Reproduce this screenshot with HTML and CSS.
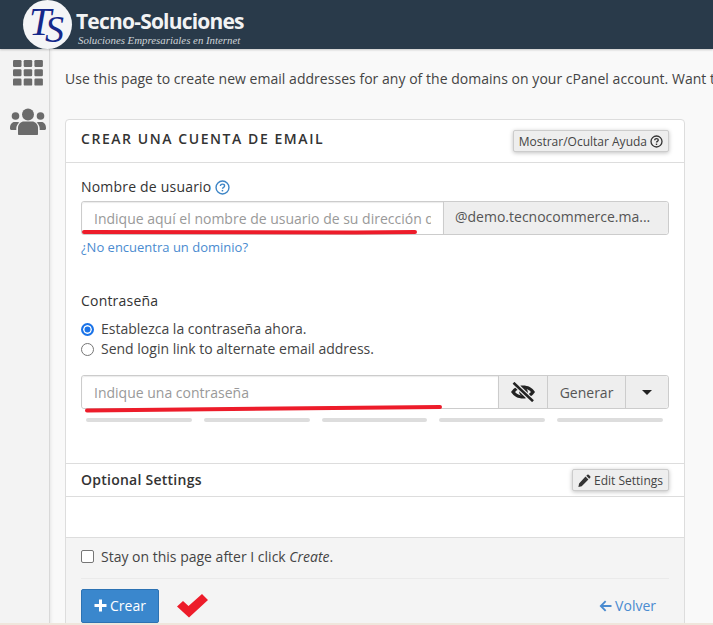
FILE: index.html
```html
<!DOCTYPE html>
<html lang="es">
<head>
<meta charset="utf-8">
<title>Crear una cuenta de email</title>
<link rel="stylesheet" href="styles.css">
</head>
<body>
<header class="topbar">
  <div class="logo-circle"><span class="logo-t">T</span><span class="logo-s">S</span></div>
  <div class="brand">
    <div class="brand-name">Tecno-Soluciones</div>
    <div class="brand-sub">Soluciones Empresariales en Internet</div>
  </div>
</header>
<div class="layout">
  <nav class="sidebar">
    <svg class="side-icon" width="30" height="26" viewBox="0 0 30 26"><g fill="#6b6b6b"><rect x="0" y="0" width="8.5" height="7" rx="1.2"/><rect x="10.7" y="0" width="8.5" height="7" rx="1.2"/><rect x="21.4" y="0" width="8.5" height="7" rx="1.2"/><rect x="0" y="9.3" width="8.5" height="7" rx="1.2"/><rect x="10.7" y="9.3" width="8.5" height="7" rx="1.2"/><rect x="21.4" y="9.3" width="8.5" height="7" rx="1.2"/><rect x="0" y="18.6" width="8.5" height="7" rx="1.2"/><rect x="10.7" y="18.6" width="8.5" height="7" rx="1.2"/><rect x="21.4" y="18.6" width="8.5" height="7" rx="1.2"/></g></svg>
    <svg class="side-icon" width="36" height="27" viewBox="0 0 36 27"><g fill="#6b6b6b"><circle cx="18" cy="6.5" r="6"/><circle cx="5.5" cy="8" r="3.8"/><circle cx="30.5" cy="8" r="3.8"/><path d="M8 26v-6c0-4 3-6.500 6-6.500h8c3 0 6 2.500 6 6.500v6c0 .6-.5 1-1 1H9c-.5 0-1-.4-1-1z"/><path d="M0 20c0-3.500 2-6 4.500-6h3c.7 0 1.300.2 1.800.5C7.500 16 6.300 18 6.300 20.500V22H1.500C.6 22 0 21.400 0 20.500z"/><path d="M36 20c0-3.500-2-6-4.500-6h-3c-.7 0-1.300.2-1.800.5 1.800 1.500 3 3.500 3 6V22h4.800c.9 0 1.500-.6 1.500-1.500z"/></g></svg>
  </nav>
  <main class="content">
    <p class="intro">Use this page to create new email addresses for any of the domains on your cPanel account. Want to</p>
    <section class="panel">
      <div class="panel-head">
        <h2 class="panel-title">CREAR UNA CUENTA DE EMAIL</h2>
        <button class="chip chip-help">Mostrar/Ocultar Ayuda
          <svg class="q-icon" width="13" height="13" viewBox="0 0 13 13"><circle cx="6.500" cy="6.500" r="5.500" fill="none" stroke="#333" stroke-width="1.300"/><path d="M4.700 5.200c0-1 .8-1.600 1.800-1.600s1.800.6 1.800 1.500c0 1.300-1.800 1.200-1.800 2.500" fill="none" stroke="#333" stroke-width="1.300"/><rect x="5.800" y="8.600" width="1.400" height="1.400" fill="#333"/></svg>
        </button>
      </div>
      <div class="panel-body">
        <label class="field-label">Nombre de usuario
          <svg class="q-icon" width="15" height="15" viewBox="0 0 13 13"><circle cx="6.500" cy="6.500" r="5.600" fill="none" stroke="#3d85c6" stroke-width="1.200"/><path d="M4.700 5.200c0-1 .8-1.600 1.800-1.600s1.800.6 1.800 1.500c0 1.300-1.800 1.200-1.800 2.500" fill="none" stroke="#3d85c6" stroke-width="1.200"/><rect x="5.800" y="8.600" width="1.300" height="1.300" fill="#3d85c6"/></svg>
        </label>
        <div class="input-group">
          <input class="text-input" type="text" placeholder="Indique aquí el nombre de usuario de su dirección de correo">
          <span class="addon addon-domain">@demo.tecnocommerce.ma...</span>
        </div>
        <a class="link-small" href="#">¿No encuentra un dominio?</a>

        <div class="field-label pw-label">Contraseña</div>
        <label class="radio-row"><span class="radio radio-on"></span>Establezca la contraseña ahora.</label>
        <label class="radio-row"><span class="radio"></span>Send login link to alternate email address.</label>
        <div class="input-group pw-group">
          <input class="text-input" type="text" placeholder="Indique una contraseña">
          <span class="addon addon-eye">
            <svg width="26" height="20" viewBox="0 0 26 20"><path d="M1 10C4 5.500 8 3.500 13 3.500S22 5.500 25 10C22 14.500 18 16.500 13 16.500S4 14.500 1 10z" fill="#222"/><path d="M5 10C7 7.700 9.500 6.500 13 6.500S19 7.700 21 10C19 12.300 16.500 13.500 13 13.500S7 12.300 5 10z" fill="#eee"/><circle cx="13.500" cy="10" r="4.300" fill="#222"/><path d="M3.500 .5 23 19.500" stroke="#eee" stroke-width="5"/><path d="M3.500 .8 23 19.200" stroke="#222" stroke-width="2.600"/></svg>
          </span>
          <span class="addon addon-gen">Generar</span>
          <span class="addon addon-caret"><span class="caret"></span></span>
        </div>
        <div class="strength">
          <span class="bar"></span><span class="bar"></span><span class="bar"></span><span class="bar"></span><span class="bar"></span>
        </div>
      </div>
      <div class="optional-head">
        <h3 class="optional-title">Optional Settings</h3>
        <button class="chip chip-edit">
          <svg width="13" height="13" viewBox="0 0 13 13"><path d="M9.300.8a1 1 0 0 1 1.400 0l1.500 1.500a1 1 0 0 1 0 1.400l-1 1L8.300 1.800zM7.500 2.600l2.900 2.900-6.700 6.700L.4 12.900l.7-3.400z" fill="#333"/></svg>
          Edit Settings
        </button>
      </div>
      <div class="optional-body"></div>
      <div class="panel-foot">
        <label class="check-row"><span class="checkbox"></span>Stay on this page after I click&nbsp;<em>Create</em>.</label>
        <div class="actions">
          <button class="btn-primary">
            <svg width="13" height="13" viewBox="0 0 13 13"><path d="M5 .5h3V5h4.500v3H8v4.500H5V8H.5V5H5z" fill="#fff"/></svg>
            Crear
          </button>
          <a class="back-link" href="#">
            <svg width="13" height="12" viewBox="0 0 13 12"><path d="M6 .5 7.300 1.800 4.200 4.900H12.500V7.100H4.200L7.300 10.200 6 11.500.5 6z" fill="#4a8bd0"/></svg>
            Volver
          </a>
        </div>
      </div>
    </section>
  </main>
</div>
<svg class="marks" width="713" height="625" viewBox="0 0 713 625">
  <path d="M84 232C180 232.500 300 233 415 232" fill="none" stroke="#ed1c2a" stroke-width="4" stroke-linecap="round"/>
  <path d="M87 410.500C200 409.500 320 408.500 440 407" fill="none" stroke="#ed1c2a" stroke-width="4" stroke-linecap="round"/>
  <path d="M177 606.500 183 601 188.500 606 202 594 208 600 189 617.500z" fill="#ed1c2a"/>
</svg>
<div class="bottom-strip"></div>
</body>
</html>
```

FILE: styles.css
```css
* { box-sizing: border-box; }
html, body { margin: 0; height: 625px; overflow: hidden; }
body {
  font-family: "Open Sans", sans-serif;
  font-size: 14px;
  color: #333;
  background: #f9f9f9;
  position: relative;
}
.topbar {
  height: 49px;
  background: #293a4a;
  display: flex;
  align-items: flex-start;
  padding-left: 23px;
  position: relative;
  z-index: 2;
  box-shadow: 0 1px 2px rgba(0,0,0,.2);
}
.logo-circle {
  width: 49px;
  height: 49px;
  flex: none;
  border-radius: 50%;
  background: #f4f5f7;
  position: relative;
  font-family: "Liberation Serif", serif;
  font-style: italic;
  color: #14288a;
}
.logo-t, .logo-s { position: absolute; line-height: 1; }
.logo-t { left: 6px; top: 2px; font-size: 40px; }
.logo-s { left: 22px; top: 10px; font-size: 38px; }
.brand { margin-left: 4px; padding-top: 7px; }
.brand-name {
  font-family: "Open Sans", sans-serif;
  font-weight: 700;
  font-size: 21px;
  line-height: 28px;
  letter-spacing: -.8px;
  color: #f2f3f4;
  white-space: nowrap;
}
.brand-sub {
  font-family: "Liberation Serif", serif;
  font-style: italic;
  font-size: 10.830px;
  line-height: 11px;
  color: #cfd4d8;
  margin-left: 2px;
  white-space: nowrap;
}
.layout { display: flex; height: 576px; }
.sidebar {
  width: 50px;
  flex: none;
  background: #f3f3f3;
  border-right: 1px solid #d8d8d8;
  box-shadow: 1px 0 3px rgba(0,0,0,.08);
  display: flex;
  flex-direction: column;
  align-items: center;
  padding-top: 11px;
  gap: 22px;
}
.side-icon { margin-left: 6px; }
.content { flex: 1; min-width: 0; padding: 20px 28px 0 15px; overflow: hidden; }
.intro {
  margin: 0 0 30px;
  font-size: 14px;
  line-height: 20px;
  letter-spacing: .03px;
  white-space: nowrap;
  color: #444;
}
.panel {
  width: 620px;
  background: #fff;
  border: 1px solid #ddd;
  border-radius: 4px 4px 0 0;
}
.panel-head {
  height: 43px;
  border-bottom: 1px solid #ddd;
  display: flex;
  align-items: center;
  justify-content: space-between;
  padding: 0 15px;
}
.panel-title {
  margin: 0;
  font-size: 14px;
  font-weight: 600;
  letter-spacing: 1.560px;
  line-height: 20px;
  padding-bottom: 4px;
}
.chip {
  font: inherit;
  font-size: 12px;
  color: #444;
  background: #eee;
  border: 1px solid #ccc;
  border-radius: 2px;
  box-shadow: 0 1px 4px rgba(0,0,0,.25);
  height: 22px;
  padding: 0 5px;
  display: inline-flex;
  align-items: center;
  gap: 3px;
  white-space: nowrap;
}
.panel-body { padding: 14px 15px 0; height: 300px; }
.field-label {
  display: flex;
  align-items: center;
  gap: 4px;
  font-weight: 500;
  letter-spacing: .2px;
  font-size: 14px;
  line-height: 20px;
}
.input-group {
  display: flex;
  height: 34px;
  margin-top: 4px;
  border: 1px solid #ccc;
  border-radius: 3px;
  width: 588px;
}
.text-input {
  flex: 1;
  min-width: 0;
  border: 0;
  outline: 0;
  padding: 0 12px;
  font: inherit;
  font-size: 14px;
  background: #fff;
  border-radius: 3px 0 0 3px;
  box-shadow: inset 0 1px 1px rgba(0,0,0,.08);
}
.text-input::placeholder { color: #999; opacity: 1; }
.addon {
  display: flex;
  align-items: center;
  justify-content: center;
  flex: none;
  background: #eee;
  border-left: 1px solid #ccc;
  color: #555;
  white-space: nowrap;
}
.addon-domain { width: 225px; padding: 0 11px 3px; justify-content: flex-start; border-radius: 0 3px 3px 0; font-size: 14px; }
.link-small {
  display: block;
  margin-top: 3px;
  font-size: 13px;
  line-height: 18px;
  color: #4a8bd0;
  text-decoration: none;
}
.pw-label { margin-top: 35px; }
.radio-row {
  display: flex;
  align-items: center;
  gap: 7px;
  line-height: 20px;
  height: 20px;
  color: #444;
}
.pw-label + .radio-row { margin-top: 8px; }
.radio {
  width: 13px;
  height: 13px;
  flex: none;
  border-radius: 50%;
  border: 1px solid #767676;
  background: #fff;
}
.radio-on { border: 2px solid #1a73e8; box-shadow: inset 0 0 0 1.500px #fff; background: #1a73e8; }
.pw-group { margin-top: 16px; }
.addon-eye { width: 49px; }
.addon-gen { width: 78px; }
.addon-caret { width: 43px; border-radius: 0 3px 3px 0; }
.caret {
  width: 0; height: 0;
  border-left: 5px solid transparent;
  border-right: 5px solid transparent;
  border-top: 5px solid #222;
}
.strength { display: flex; gap: 12px; width: 577px; margin: 9px 0 0 5px; }
.bar { flex: 1; height: 4px; background: #ddd; border-radius: 2px; }
.optional-head {
  height: 34px;
  border-top: 1px solid #ddd;
  border-bottom: 1px solid #ddd;
  display: flex;
  align-items: center;
  justify-content: space-between;
  padding: 0 15px;
}
.optional-title { margin: 0; padding-bottom: 2px; font-size: 14px; font-weight: 600; letter-spacing: .25px; }
.chip-edit { gap: 3px; }
.optional-body { height: 40px; }
.panel-foot {
  background: #f4f4f4;
  border-top: 1px solid #ddd;
  padding: 0 15px;
  height: 100px;
}
.check-row {
  display: flex;
  align-items: center;
  height: 41px;
  padding-bottom: 3px;
  border-bottom: 1px solid #eaeaea;
  color: #444;
  white-space: nowrap;
}
.checkbox {
  width: 13px;
  height: 13px;
  flex: none;
  margin-right: 7px;
  background: #fff;
  border: 1px solid #767676;
  border-radius: 2px;
}
.actions { display: flex; align-items: center; justify-content: space-between; padding-top: 10px; }
.btn-primary {
  font: inherit;
  font-size: 14px;
  color: #fff;
  background: #3a87cd;
  border: 1px solid #2c72b3;
  border-radius: 2px;
  height: 34px;
  width: 78px;
  padding-bottom: 2px;
  display: inline-flex;
  align-items: center;
  justify-content: center;
  gap: 3px;
}
.back-link {
  display: inline-flex;
  align-items: center;
  gap: 3px;
  color: #4a8bd0;
  text-decoration: none;
  font-size: 14px;
  margin: 0 13px 1px 0;
}
.marks { position: absolute; left: 0; top: 0; z-index: 3; pointer-events: none; }
.bottom-strip {
  position: absolute;
  left: 0; right: 0; bottom: 0;
  height: 2px;
  background: #efe6dc;
  z-index: 4;
}
```
